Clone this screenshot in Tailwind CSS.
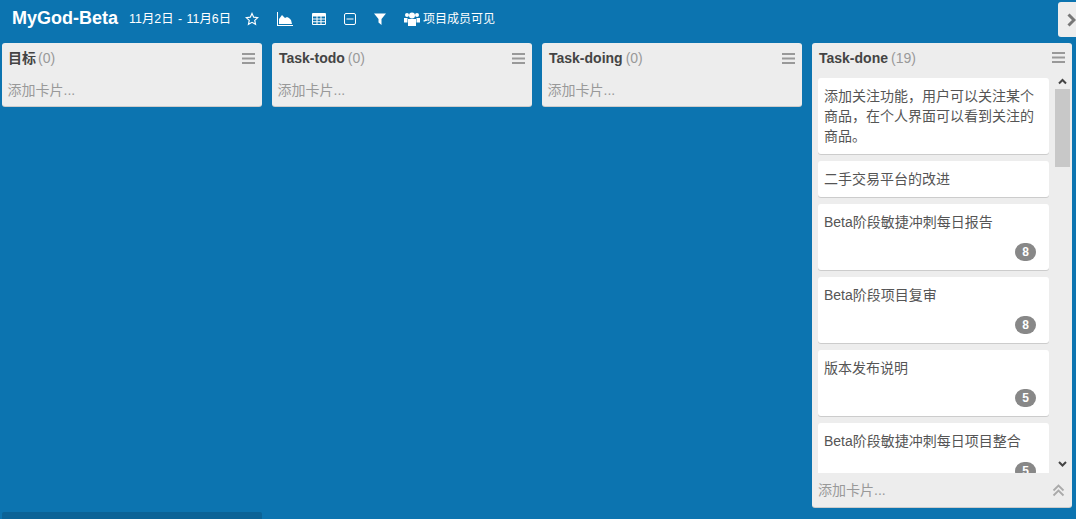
<!DOCTYPE html>
<html lang="zh-CN">
<head>
<meta charset="utf-8">
<title>MyGod-Beta</title>
<script src="https://cdn.jsdelivr.net/npm/@tailwindcss/browser@4"></script>
</head>
<body class="m-0">
<div class="relative w-[1076px] h-[519px] overflow-hidden bg-[#0c74b0] text-[#444] font-['Liberation_Sans','Noto_Sans_CJK_SC',sans-serif]">
  <header class="h-[43px] pl-3 flex items-center text-white">
    <h1 class="text-[18px] leading-[34px] font-bold mb-[8px] m-0">MyGod-Beta</h1>
    <span class="ml-[11px] text-[12.4px] mb-[5px] whitespace-pre [word-spacing:1px]">11月2日 - 11月6日</span>
    <svg class="ml-[14px] mb-[5px] w-[14px] h-[14px]" viewBox="0 0 24 24" fill="none" stroke="white" stroke-width="2"><path d="M12 2.500l2.900 6.300 6.900.8-5.100 4.700 1.400 6.800-6.100-3.400-6.100 3.400 1.400-6.800-5.100-4.700 6.900-.8z"/></svg>
    <svg class="ml-[18px] mb-[5px] w-[16px] h-[14px]" viewBox="0 0 16 14" fill="white"><path d="M0 0h1v13h15v1H0z"/><path d="M2 12V7l3-4 3 3 2-1 2 1 2 2 1 4z"/></svg>
    <svg class="ml-[19px] mb-[5px] w-[14px] h-[12px]" viewBox="0 0 14 12" fill="white"><path fill-rule="evenodd" d="M1 0h12a1 1 0 0 1 1 1v10a1 1 0 0 1-1 1H1a1 1 0 0 1-1-1V1a1 1 0 0 1 1-1zM1 3.500v2h3.500v-2zM5.500 3.500v2h3v-2zM9.500 3.500v2H13v-2zM1 6.500v1.800h3.500V6.500zM5.500 6.500v1.800h3V6.500zM9.500 6.500v1.800H13V6.500zM1 9.300V11h3.500V9.300zM5.500 9.300V11h3V9.300zM9.500 9.300V11H13V9.300z"/></svg>
    <svg class="ml-[18px] mb-[5px] w-[12px] h-[12px]" viewBox="0 0 12 12" fill="none" stroke="white"><rect x=".5" y=".5" width="11" height="11" rx="1.500"/><path d="M2.500 6h7"/></svg>
    <svg class="ml-[18px] mb-[5px] w-[12px] h-[12px]" viewBox="0 0 12 12" fill="white"><path d="M0 .5h12L7.500 6v6L4.500 9.500V6z"/></svg>
    <svg class="ml-[18px] mb-[5px] w-[16px] h-[14px]" viewBox="0 0 16 14" fill="white"><circle cx="3" cy="3" r="2"/><circle cx="13" cy="3" r="2"/><circle cx="8" cy="3.500" r="3"/><path d="M0 6h3.500v4.500H0zM12.500 6H16v4.500h-3.500zM4 7h8v7H4z"/></svg>
    <span class="ml-[3px] text-[12px] mb-[5px]">项目成员可见</span>
  </header>

  <main class="flex items-start gap-[10px] pl-[2px]">
    <section class="w-[260px] h-[63px] rounded-[3px] bg-[#ededed] shadow-[0_1px_0_#ccc]">
      <div class="h-[31px] pb-[1px] px-[6px] flex items-center text-[14px] leading-[20px]"><b class="font-bold">目标</b><span class="ml-[2px] text-[#999]">(0)</span><svg class="ml-auto mr-[1px] w-[13px] h-[11px]" viewBox="0 0 13 11" fill="#999"><path d="M0 0h13v2H0zM0 4.500h13v2H0zM0 9h13v2H0z"/></svg></div>
      <div class="pt-[6px] pl-[5.500px] text-[14px] leading-[20px] text-[#999]">添加卡片...</div>
    </section>
    <section class="w-[260px] h-[63px] rounded-[3px] bg-[#ededed] shadow-[0_1px_0_#ccc]">
      <div class="h-[31px] pb-[1px] px-[7px] flex items-center text-[14px] leading-[20px]"><b class="font-bold">Task-todo</b><span class="ml-[3px] text-[#999]">(0)</span><svg class="ml-auto w-[13px] h-[11px]" viewBox="0 0 13 11" fill="#999"><path d="M0 0h13v2H0zM0 4.500h13v2H0zM0 9h13v2H0z"/></svg></div>
      <div class="pt-[6px] pl-[5.500px] text-[14px] leading-[20px] text-[#999]">添加卡片...</div>
    </section>
    <section class="w-[260px] h-[63px] rounded-[3px] bg-[#ededed] shadow-[0_1px_0_#ccc]">
      <div class="h-[31px] pb-[1px] px-[7px] flex items-center text-[14px] leading-[20px]"><b class="font-bold">Task-doing</b><span class="ml-[3px] text-[#999]">(0)</span><svg class="ml-auto w-[13px] h-[11px]" viewBox="0 0 13 11" fill="#999"><path d="M0 0h13v2H0zM0 4.500h13v2H0zM0 9h13v2H0z"/></svg></div>
      <div class="pt-[6px] pl-[5.500px] text-[14px] leading-[20px] text-[#999]">添加卡片...</div>
    </section>
    <section class="w-[260px] h-[464px] flex flex-col rounded-[3px] bg-[#ededed] shadow-[0_1px_0_#ccc]">
      <div class="h-[32px] pb-[3px] shrink-0 px-[7px] flex items-center text-[14px] leading-[20px]"><b class="font-bold">Task-done</b><span class="ml-[3px] text-[#999]">(19)</span><svg class="ml-auto w-[13px] h-[11px]" viewBox="0 0 13 11" fill="#999"><path d="M0 0h13v2H0zM0 4.500h13v2H0zM0 9h13v2H0z"/></svg></div>
      <div class="h-[398px] flex">
        <div class="w-[237px] pl-[6px] pt-[3px] overflow-hidden flex flex-col gap-[7px] text-[14px] leading-[20px] text-[#555]">
          <article class="shrink-0 w-[231px] h-[76px] rounded-[3px] bg-white shadow-[0_1px_0_#ccc] px-[6px] pt-[8px]">添加关注功能，用户可以关注某个商品，在个人界面可以看到关注的商品。</article>
          <article class="shrink-0 w-[231px] h-[36px] rounded-[3px] bg-white shadow-[0_1px_0_#ccc] px-[6px] pt-[8px]">二手交易平台的改进</article>
          <article class="shrink-0 w-[231px] h-[66px] rounded-[3px] bg-white shadow-[0_1px_0_#ccc] px-[6px] pt-[8px] flex flex-col">Beta阶段敏捷冲刺每日报告<span class="self-end mr-[7px] mt-[11px] w-[21px] h-[18px] rounded-full bg-[#888] text-white text-[12px] leading-[18px] font-bold text-center">8</span></article>
          <article class="shrink-0 w-[231px] h-[66px] rounded-[3px] bg-white shadow-[0_1px_0_#ccc] px-[6px] pt-[8px] flex flex-col">Beta阶段项目复审<span class="self-end mr-[7px] mt-[11px] w-[21px] h-[18px] rounded-full bg-[#888] text-white text-[12px] leading-[18px] font-bold text-center">8</span></article>
          <article class="shrink-0 w-[231px] h-[66px] rounded-[3px] bg-white shadow-[0_1px_0_#ccc] px-[6px] pt-[8px] flex flex-col">版本发布说明<span class="self-end mr-[7px] mt-[11px] w-[21px] h-[18px] rounded-full bg-[#888] text-white text-[12px] leading-[18px] font-bold text-center">5</span></article>
          <article class="shrink-0 w-[231px] h-[66px] rounded-[3px] bg-white shadow-[0_1px_0_#ccc] px-[6px] pt-[8px] flex flex-col">Beta阶段敏捷冲刺每日项目整合<span class="self-end mr-[7px] mt-[11px] w-[21px] h-[18px] rounded-full bg-[#888] text-white text-[12px] leading-[18px] font-bold text-center">5</span></article>
        </div>
        <div class="ml-[6px] w-[15px] flex flex-col">
          <svg class="w-[15px] h-[14px] shrink-0" viewBox="0 0 15 14" fill="none" stroke="#444" stroke-width="2"><path d="M4 8.500l3.500-3.500 3.500 3.500"/></svg>
          <div class="h-[78px] bg-[#c8c8c8]"></div>
          <svg class="w-[15px] h-[14px] shrink-0 mt-auto mb-[2px]" viewBox="0 0 15 14" fill="none" stroke="#444" stroke-width="2"><path d="M4 5l3.500 3.500L11 5"/></svg>
        </div>
      </div>
      <div class="h-[34px] pt-[1px] flex items-center px-[6px] text-[14px] text-[#999]">添加卡片...<svg class="ml-auto mr-[1px] w-[13px] h-[13px]" viewBox="0 0 13 13" fill="none" stroke="#aaa" stroke-width="1.800"><path d="M1.500 6.500L6.500 1.500l5 5M1.500 11.500l5-5 5 5"/></svg></div>
    </section>
  </main>

  <button class="absolute left-[1058px] top-[2px] w-[18px] h-[35px] rounded-l-[3px] bg-[#ededed] flex items-center pl-[9px]" aria-label="展开"><svg class="w-[9px] h-[14px] shrink-0" viewBox="0 0 9 14" fill="none" stroke="#777" stroke-width="3"><path d="M1.500 1.500L7 7l-5.500 5.500"/></svg></button>
  <div class="absolute left-[2px] top-[512px] w-[260px] h-[7px] rounded-t-[2px] bg-[#0b6397]"></div>
</div>
</body>
</html>
